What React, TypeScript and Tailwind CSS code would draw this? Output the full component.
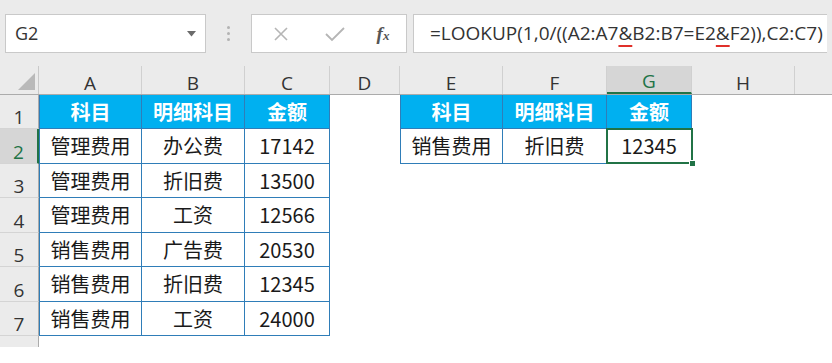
import React from "react";

const colW = [
  "w-[39px]",
  "w-[103px]",
  "w-[103px]",
  "w-[85px]",
  "w-[70px]",
  "w-[103px]",
  "w-[104px]",
  "w-[85px]",
  "w-[103px]",
];
const letters = ["A", "B", "C", "D", "E", "F", "G", "H"];

const rows: { h: string; left: string[]; right?: string[] }[] = [
  { h: "h-[34px]", left: ["科目", "明细科目", "金额"], right: ["科目", "明细科目", "金额"] },
  { h: "h-[35px]", left: ["管理费用", "办公费", "17142"], right: ["销售费用", "折旧费", "12345"] },
  { h: "h-[34px]", left: ["管理费用", "折旧费", "13500"] },
  { h: "h-[35px]", left: ["管理费用", "工资", "12566"] },
  { h: "h-[34px]", left: ["销售费用", "广告费", "20530"] },
  { h: "h-[35px]", left: ["销售费用", "折旧费", "12345"] },
  { h: "h-[34px]", left: ["销售费用", "工资", "24000"] },
];

const cjk = { fontFamily: '"Noto Sans CJK SC", "Noto Sans", sans-serif' };
const ui = { fontFamily: '"Open Sans", "Noto Sans", sans-serif' };

function TableCell({
  text,
  w,
  header,
  first,
}: {
  text: string;
  w: string;
  header: boolean;
  first: boolean;
}) {
  return (
    <div
      className={`${w} h-full shrink-0 flex items-center justify-center border-r border-b border-[#2f7db8] ${
        first ? "border-l" : ""
      } ${header ? "bg-[#00b0f0] text-white font-bold" : "bg-white text-[#1a1a1a]"} text-[20px] leading-none`}
      style={cjk}
    >
      {text}
    </div>
  );
}

export default function App() {
  return (
    <div className="w-[832px] h-[363px] bg-white overflow-hidden relative select-none">
      {/* formula bar band */}
      <div className="h-[66px] bg-[#ebebeb] flex items-start pt-[14px] pl-[5px]">
        <div className="w-[201px] h-[39px] bg-white border border-[#c9c9c9] flex items-center pl-[9px] pr-[9px]">
          <span className="text-[18px] text-[#333] flex-1" style={ui}>
            G2
          </span>
          <svg width="9" height="6" viewBox="0 0 9 6">
            <path d="M0 0 H9 L4.5 5.5 Z" fill="#6b6b6b" />
          </svg>
        </div>
        <div className="w-[45px] h-[39px] flex flex-col items-center justify-center gap-[3px]">
          <span className="w-[3px] h-[3px] bg-[#b3b3b3] rounded-full" />
          <span className="w-[3px] h-[3px] bg-[#b3b3b3] rounded-full" />
          <span className="w-[3px] h-[3px] bg-[#b3b3b3] rounded-full" />
        </div>
        <div className="w-[156px] h-[39px] bg-white border border-[#c9c9c9] flex items-center">
          <div className="w-[58px] flex justify-center">
            <svg width="16" height="16" viewBox="0 0 16 16">
              <path d="M2 2 L14 14 M14 2 L2 14" stroke="#b5b5b5" strokeWidth="1.6" fill="none" />
            </svg>
          </div>
          <div className="w-[50px] flex justify-center">
            <svg width="20" height="16" viewBox="0 0 20 16">
              <path d="M1 8 L7 14 L19 2" stroke="#b5b5b5" strokeWidth="1.8" fill="none" />
            </svg>
          </div>
          <div className="flex-1 flex justify-center items-baseline text-[#555] italic font-bold" style={{ fontFamily: '"Liberation Serif", serif' }}>
            <span className="text-[19px] leading-none">f</span>
            <span className="text-[13px] leading-none">x</span>
          </div>
        </div>
        <div className="ml-[6px] w-[414px] h-[39px] bg-white border border-[#c9c9c9] border-r-0 flex items-center pl-[16px]">
          <span className="text-[19px] text-[#333] whitespace-nowrap" style={ui}>
            =LOOKUP(1,0/((A2:A7
            <span className="underline decoration-[#e0302a] decoration-2 underline-offset-[5px]">&amp;</span>
            B2:B7=E2
            <span className="underline decoration-[#e0302a] decoration-2 underline-offset-[5px]">&amp;</span>
            F2)),C2:C7)
          </span>
        </div>
      </div>

      {/* column headers */}
      <div className="h-[29px] flex bg-[#ebebeb] border-b border-[#ababab]">
        <div className={`${colW[0]} h-full shrink-0 relative border-r border-[#c9c9c9]`}>
          <svg className="absolute right-[3px] bottom-[4px]" width="17" height="17" viewBox="0 0 17 17">
            <path d="M17 0 L17 17 L0 17 Z" fill="#b9b9b9" />
          </svg>
        </div>
        {letters.map((l, i) => {
          const sel = l === "G";
          return (
            <div
              key={l}
              className={`${colW[i + 1]} h-full shrink-0 flex items-end justify-center pb-[1px] border-r border-[#d0d0d0] text-[19px] leading-none ${
                sel ? "bg-[#d6d6d6] text-[#217346] border-b-2 border-b-[#217346]" : "text-[#333]"
              }`}
              style={ui}
            >
              {l}
            </div>
          );
        })}
        <div className="flex-1 h-full" />
      </div>

      {/* data rows */}
      {rows.map((r, ri) => {
        const rowNum = ri + 1;
        const selRow = rowNum === 2;
        return (
          <div key={ri} className={`${r.h} flex`}>
            <div
              className={`${colW[0]} h-full shrink-0 flex items-end justify-center pb-[1px] border-b border-[#d4d4d4] text-[19px] leading-none ${
                selRow
                  ? "bg-[#d6d6d6] text-[#217346] border-r-2 border-r-[#217346]"
                  : "bg-[#ebebeb] text-[#333] border-r border-r-[#ababab]"
              }`}
              style={ui}
            >
              {rowNum}
            </div>
            {r.left.map((t, ci) => (
              <TableCell key={ci} text={t} w={colW[ci + 1]} header={ri === 0} first={ci === 0} />
            ))}
            <div className={`${colW[4]} h-full shrink-0 bg-white`} />
            {r.right ? (
              r.right.map((t, ci) => {
                const isSel = ri === 1 && ci === 2;
                if (isSel) {
                  return (
                    <div key={ci} className={`${colW[ci + 5]} h-full shrink-0 relative`}>
                      <TableCell text={t} w="w-full" header={false} first={false} />
                      <div className="absolute -left-[1px] -top-[1px] -right-[1px] bottom-[0px] border-2 border-[#217346] pointer-events-none" />
                      <div className="absolute -right-[4px] -bottom-[3px] w-[7px] h-[7px] bg-[#217346] border border-white" />
                    </div>
                  );
                }
                return <TableCell key={ci} text={t} w={colW[ci + 5]} header={ri === 0} first={ci === 0} />;
              })
            ) : (
              <>
                <div className={`${colW[5]} h-full shrink-0 bg-white`} />
                <div className={`${colW[6]} h-full shrink-0 bg-white`} />
                <div className={`${colW[7]} h-full shrink-0 bg-white`} />
              </>
            )}
            <div className="flex-1 h-full bg-white" />
          </div>
        );
      })}

      {/* partial row 8 */}
      <div className="h-[11px] flex">
        <div className={`${colW[0]} h-full shrink-0 bg-[#ebebeb] border-r border-[#ababab]`} />
        <div className="flex-1 bg-white" />
      </div>
    </div>
  );
}
